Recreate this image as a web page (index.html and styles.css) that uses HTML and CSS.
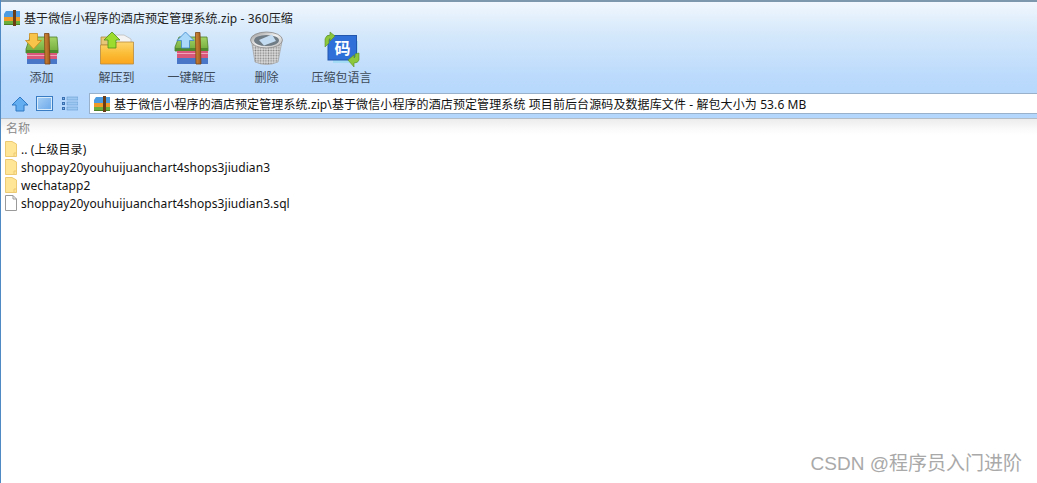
FILE: index.html
```html
<!DOCTYPE html>
<html lang="en">
<head>
    <meta charset="UTF-8">
    <title>基于微信小程序的酒店预定管理系统.zip - 360压缩</title>
    <link rel="stylesheet" href="styles.css">
</head>
<body>
    <div class="window">
        <div class="top-panel">
            <div class="title-bar">
                <svg class="app-icon" viewBox="0 0 16 16">
                    <path d="M0 4 L2 1 H16 V7 H0 Z" fill="#4d9be0"/>
                    <rect x="0" y="7" width="16" height="4" fill="#f09a28"/>
                    <rect x="0" y="11" width="16" height="4" fill="#6cae3a"/>
                    <rect x="0" y="14" width="16" height="1" fill="#4a7f28"/>
                    <rect x="9" y="0" width="3" height="16" fill="#6b3d16"/>
                </svg>
                <span>基于微信小程序的酒店预定管理系统.zip - 360压缩</span>
            </div>

            <div class="toolbar">
                <div class="tool">
                    <svg class="tool-icon" viewBox="0 0 36 34">
                        <defs>
                            <linearGradient id="green" x1="0" y1="0" x2="0" y2="1">
                                <stop offset="0" stop-color="#a4d468"/>
                                <stop offset="1" stop-color="#6fa83a"/>
                            </linearGradient>
                            <linearGradient id="strap" x1="0" y1="0" x2="1" y2="0">
                                <stop offset="0" stop-color="#d08a3a"/>
                                <stop offset="1" stop-color="#a0581c"/>
                            </linearGradient>
                            <linearGradient id="folder" x1="0" y1="0" x2="0" y2="1">
                                <stop offset="0" stop-color="#fdd66f"/>
                                <stop offset="0.55" stop-color="#fbbb34"/>
                                <stop offset="1" stop-color="#fba51e"/>
                            </linearGradient>
                        </defs>
                        <path d="M2 18 L6 6 H33 L34 18 V22 H2 Z" fill="url(#green)" stroke="#4f7f2a" stroke-width="0.8"/>
                        <rect x="2" y="19" width="32" height="3" fill="#4f8a2e"/>
                        <rect x="3" y="22" width="30" height="6" fill="#d9577a"/>
                        <rect x="3" y="24" width="30" height="1" fill="#f0a5b8"/>
                        <rect x="3" y="28" width="30" height="5" fill="#4a76c8"/>
                        <path d="M5.5 2.5 H13.5 V9.5 H17.5 L9.5 18 L1.5 9.5 H5.5 Z" fill="#f8c44a" stroke="#c98a1c" stroke-width="0.8"/>
                        <path d="M20.5 2.5 H25 L26 33 H21 Z" fill="url(#strap)" stroke="#7a4312" stroke-width="0.8"/>
                    </svg>
                    <span>添加</span>
                </div>
                <div class="tool">
                    <svg class="tool-icon" viewBox="0 0 36 34">
                        <path d="M2 6 H12 V14 H2 Z" fill="#e8c878" stroke="#b08a3a" stroke-width="0.8"/>
                        <path d="M9 4 L25 4 L32 8 V18 H9 Z" fill="#f4f4f4" stroke="#bdbdbd" stroke-width="0.8"/>
                        <path d="M1.5 14 H15 L18 11 H34.5 V33 H1.5 Z" fill="url(#folder)" stroke="#b98a3c" stroke-width="0.8"/>
                        <path d="M13 1 L21 9 H17 V17 H9 V9 H5 Z" fill="#9bdc2e" stroke="#4e8f1a" stroke-width="0.8"/>
                    </svg>
                    <span>解压到</span>
                </div>
                <div class="tool">
                    <svg class="tool-icon" viewBox="0 0 36 34">
                        <path d="M1 16 L5 6 H33 L34 16 V20 H1 Z" fill="url(#green)" stroke="#4f7f2a" stroke-width="0.8"/>
                        <rect x="1" y="17" width="33" height="3" fill="#4f8a2e"/>
                        <rect x="3" y="20" width="31" height="7" fill="#d9577a"/>
                        <rect x="3" y="22" width="31" height="1" fill="#f0a5b8"/>
                        <rect x="3" y="27" width="31" height="6" fill="#4a76c8"/>
                        <path d="M11.5 1 L20 9.5 H15.5 V17 H7.5 V9.5 H3 Z" fill="#a9d8fb" stroke="#3f86cc" stroke-width="0.8"/>
                        <path d="M21.5 1.5 H26 L27 33 H22 Z" fill="url(#strap)" stroke="#7a4312" stroke-width="0.8"/>
                    </svg>
                    <span>一键解压</span>
                </div>
                <div class="tool">
                    <svg class="tool-icon" viewBox="0 0 36 34">
                        <defs>
                            <pattern id="mesh" width="2.6" height="2.6" patternUnits="userSpaceOnUse">
                                <rect width="2.6" height="2.6" fill="#dedede"/>
                                <circle cx="1.3" cy="1.3" r="0.85" fill="#7f7f7f"/>
                            </pattern>
                            <linearGradient id="rim" x1="0" y1="0" x2="1" y2="1">
                                <stop offset="0" stop-color="#8f8f8f"/>
                                <stop offset="0.5" stop-color="#f2f2f2"/>
                                <stop offset="1" stop-color="#b5b5b5"/>
                            </linearGradient>
                        </defs>
                        <path d="M2.5 10 L6 31 Q17.5 36 29 31 L33 10 Z" fill="url(#mesh)" stroke="#a8a8a8" stroke-width="0.8"/>
                        <ellipse cx="17.5" cy="9" rx="16" ry="8" fill="url(#rim)" stroke="#8a8a8a" stroke-width="0.8"/>
                        <ellipse cx="17.5" cy="9.5" rx="12.5" ry="5.5" fill="#6f7b85"/>
                        <path d="M10 9 L23 3.5 L27 10 L15 14.5 Z" fill="#c4dcf2"/>
                    </svg>
                    <span>删除</span>
                </div>
                <div class="tool">
                    <svg class="tool-icon" viewBox="0 0 36 34">
                        <rect x="9" y="10" width="25" height="22" fill="#a4dcf5"/>
                        <rect x="4" y="4.5" width="28.5" height="24.5" fill="#2f6fd8" stroke="#2257ad"/>
                        <text x="18.5" y="22.5" class="code-glyph">码</text>
                        <path d="M1 16 V8 Q2 4 6 4 V1 L11 5 L6 10 V7.5 Q4.5 8 5 12 Z" fill="#8cc63a" stroke="#5c8f22" stroke-width="0.6"/>
                        <path d="M35 22 V29 Q34 32 30 32 V36 L24 29 L30 24 V27 Q31.5 27 31 23 Z" fill="#8cc63a" stroke="#5c8f22" stroke-width="0.6"/>
                    </svg>
                    <span>压缩包语言</span>
                </div>
            </div>

            <div class="address-row">
                <svg class="nav-up" viewBox="0 0 18 16">
                    <path d="M9 1 L17 9 H13 V15 H5 V9 H1 Z" fill="#62aef0" stroke="#2f78c4"/>
                </svg>
                <div class="nav-view"></div>
                <svg class="nav-list" viewBox="0 0 16 15">
                    <rect x="0.5" y="1.5" width="2" height="2" fill="#7fb4ea" stroke="#3a6fb0"/>
                    <rect x="5" y="1" width="11" height="3" fill="#9cc8f2" stroke="#5a8fc8" stroke-width="0.5"/>
                    <rect x="0.5" y="6.5" width="2" height="2" fill="#7fb4ea" stroke="#3a6fb0"/>
                    <rect x="5" y="6" width="11" height="3" fill="#9cc8f2" stroke="#5a8fc8" stroke-width="0.5"/>
                    <rect x="0.5" y="11.5" width="2" height="2" fill="#7fb4ea" stroke="#3a6fb0"/>
                    <rect x="5" y="11" width="11" height="3" fill="#9cc8f2" stroke="#5a8fc8" stroke-width="0.5"/>
                </svg>
                <div class="address-box">
                    <svg class="app-icon" viewBox="0 0 16 16">
                        <path d="M0 4 L2 1 H16 V7 H0 Z" fill="#4d9be0"/>
                        <rect x="0" y="7" width="16" height="4" fill="#f09a28"/>
                        <rect x="0" y="11" width="16" height="4" fill="#6cae3a"/>
                        <rect x="0" y="14" width="16" height="1" fill="#4a7f28"/>
                        <rect x="9" y="0" width="3" height="16" fill="#6b3d16"/>
                    </svg>
                    <span>基于微信小程序的酒店预定管理系统.zip\基于微信小程序的酒店预定管理系统 项目前后台源码及数据库文件 - 解包大小为 53.6 MB</span>
                </div>
            </div>
        </div>

        <div class="file-list">
            <div class="list-header">名称</div>
            <div class="file-row">
                <svg class="file-icon" viewBox="0 0 12 16"><path d="M0.5 0.5 H7 L11.5 3 V15.5 H0.5 Z" fill="#ffe596" stroke="#ecc973"/><path d="M9 15 V12 H11" fill="none" stroke="#ecc973"/></svg>
                <span>.. (上级目录)</span>
            </div>
            <div class="file-row">
                <svg class="file-icon" viewBox="0 0 12 16"><path d="M0.5 0.5 H7 L11.5 3 V15.5 H0.5 Z" fill="#ffe596" stroke="#ecc973"/><path d="M9 15 V12 H11" fill="none" stroke="#ecc973"/></svg>
                <span>shoppay20youhuijuanchart4shops3jiudian3</span>
            </div>
            <div class="file-row">
                <svg class="file-icon" viewBox="0 0 12 16"><path d="M0.5 0.5 H7 L11.5 3 V15.5 H0.5 Z" fill="#ffe596" stroke="#ecc973"/><path d="M9 15 V12 H11" fill="none" stroke="#ecc973"/></svg>
                <span>wechatapp2</span>
            </div>
            <div class="file-row">
                <svg class="file-icon" viewBox="0 0 12 16"><path d="M0.5 0.5 H8 L11.5 4 V15.5 H0.5 Z M8 0.5 V4 H11.5" fill="#fff" stroke="#9a9a9a"/></svg>
                <span>shoppay20youhuijuanchart4shops3jiudian3.sql</span>
            </div>
        </div>

        <div class="watermark">CSDN @程序员入门进阶</div>
    </div>
</body>
</html>
```

FILE: styles.css
```css
* {
    margin: 0;
    padding: 0;
    box-sizing: border-box;
}

html, body {
    width: 100%;
    height: 100%;
    overflow: hidden;
}

body {
    font-family: "Noto Sans", "Noto Sans CJK SC", sans-serif;
    background: #fff;
}

.window {
    position: relative;
    height: 100%;
    border-left: 1px solid #4f8ac4;
    display: flex;
    flex-direction: column;
}

.top-panel {
    height: 119px;
    border-top: 2px solid #7d97ad;
    border-bottom: 1px solid #b4bcc6;
    background: linear-gradient(to bottom, #f1f7fd 0, #d6e9fb 30px, #bbdafc 75px, #b3d6fc 100%);
}

.title-bar {
    height: 29px;
    padding: 3px 0 0 3px;
    display: flex;
    align-items: center;
    gap: 4px;
    font-size: 12px;
    letter-spacing: 0.1px;
    color: #222;
}

.app-icon {
    width: 16px;
    height: 16px;
    flex: none;
}

.toolbar {
    height: 57px;
    padding-left: 3px;
    display: flex;
}

.tool {
    width: 75px;
    display: flex;
    flex-direction: column;
    align-items: center;
    font-size: 12px;
    color: #3d4a58;
}

.tool-icon {
    width: 36px;
    height: 34px;
    margin-bottom: 3px;
    overflow: visible;
}

.code-glyph {
    font-family: "Noto Sans CJK SC", sans-serif;
    font-size: 16px;
    font-weight: bold;
    fill: #fff;
    text-anchor: middle;
}

.address-row {
    height: 31px;
    padding: 5px 0 5px 10px;
    display: flex;
    align-items: center;
}

.nav-up {
    width: 18px;
    height: 16px;
    margin-right: 7px;
}

.nav-view {
    width: 17px;
    height: 15px;
    margin-right: 9px;
    border: 1px solid #3a7cc4;
    box-shadow: inset 0 0 0 1px #d8ebfb;
    background: linear-gradient(135deg, #a8d0f6, #6aa8ea);
}

.nav-list {
    width: 16px;
    height: 15px;
    margin-right: 11px;
}

.address-box {
    flex: 1;
    height: 21px;
    padding-left: 4px;
    display: flex;
    align-items: center;
    gap: 4px;
    border: 1px solid #9ab1cb;
    border-right: none;
    background: #fff;
    font-size: 12px;
    letter-spacing: 0.1px;
    color: #111;
}

.file-list {
    flex: 1;
    font-size: 12px;
    color: #111;
}

.list-header {
    height: 21px;
    padding: 1px 0 0 5px;
    background: linear-gradient(to bottom, #ececec 0, #fafafa 10px, #fff 16px);
    color: #8a8a8a;
    line-height: 18px;
}

.file-row {
    height: 18px;
    padding-left: 4px;
    display: flex;
    align-items: center;
    gap: 4px;
    letter-spacing: 0.06px;
}

.file-icon {
    width: 12px;
    height: 16px;
    flex: none;
}

.watermark {
    position: absolute;
    right: 15px;
    bottom: 8px;
    font-family: "Liberation Sans", "Noto Sans CJK SC", sans-serif;
    font-size: 19px;
    color: #a9a9a9;
}
```
